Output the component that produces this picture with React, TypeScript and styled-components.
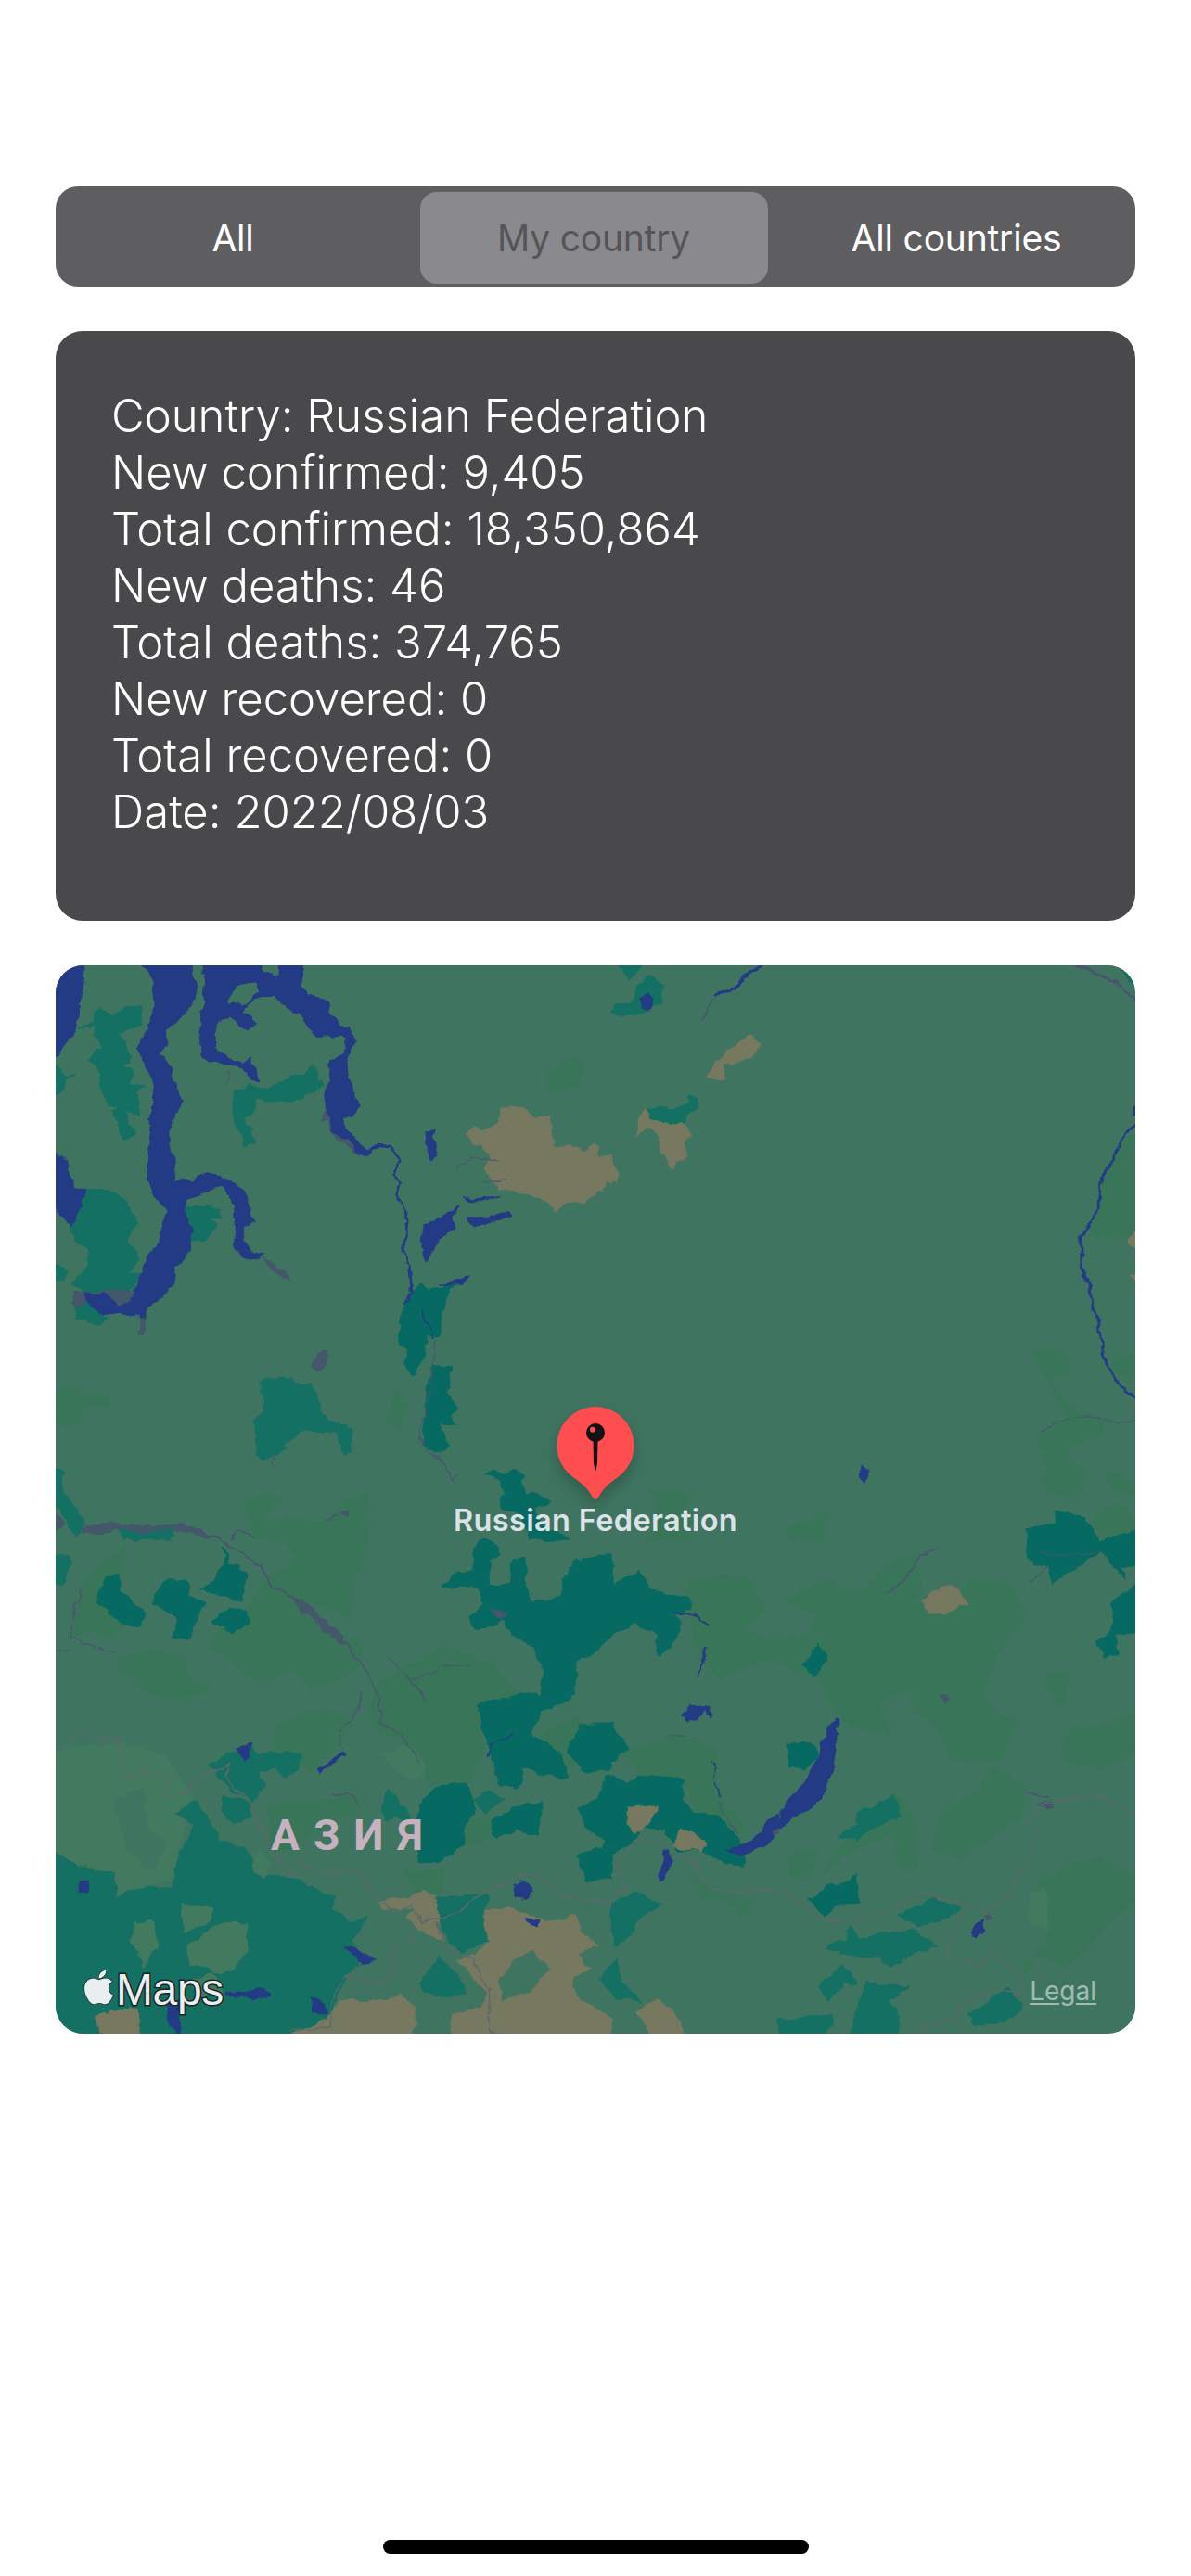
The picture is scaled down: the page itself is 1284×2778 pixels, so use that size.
import React from "react";
import styled, { createGlobalStyle } from "styled-components";
import { FaApple } from "react-icons/fa";

const GlobalStyle = createGlobalStyle`
  html, body { margin: 0; padding: 0; background: #ffffff; }
  * { box-sizing: border-box; }
`;

const Page = styled.div`
  width: 1284px;
  height: 2778px;
  padding: 201px 60px 0;
  display: flex;
  flex-direction: column;
  overflow: hidden;
  background: #ffffff;
  font-family: Inter, "Liberation Sans", sans-serif;
`;

const SegmentBar = styled.div`
  height: 108px;
  flex: none;
  padding: 6px 6px 3px;
  display: grid;
  grid-template-columns: 370px 375px 374px;
  column-gap: 16.5px;
  background: #5e5e60;
  border-radius: 24px;
`;

const Segment = styled.div<{ $selected?: boolean }>`
  display: flex;
  align-items: center;
  justify-content: center;
  font-size: 39px;
  font-weight: 400;
  letter-spacing: -0.2px;
  color: ${(p) => (p.$selected ? "#555557" : "#ffffff")};
  background: ${(p) => (p.$selected ? "#8a8a8e" : "transparent")};
  border-radius: 18px;
`;

const InfoCard = styled.div`
  margin-top: 48px;
  height: 636px;
  flex: none;
  padding: 61px 60px 0;
  background: #49494b;
  border-radius: 29px;
`;

const InfoLine = styled.div`
  font-size: 49px;
  line-height: 61px;
  font-weight: 350;
  letter-spacing: 0px;
  color: #ffffff;
  white-space: nowrap;
`;

const MapSurface = styled.div`
  position: relative;
  margin-top: 48px;
  height: 1152px;
  flex: none;
  overflow: hidden;
  background: #3f7560;
  border-radius: 30px;
`;

const MapArt = styled.svg`
  display: block;
  width: 100%;
  height: 100%;
`;

const PinWrap = styled.svg`
  position: absolute;
  left: 532px;
  top: 472px;
  width: 100px;
  height: 110px;
  overflow: visible;
  filter: drop-shadow(0 8px 8px rgba(0, 0, 0, 0.22));
`;

const PinLabel = styled.div`
  position: absolute;
  left: 0;
  right: 0;
  top: 581px;
  text-align: center;
  font-size: 32.5px;
  line-height: 36px;
  font-weight: 600;
  letter-spacing: 0.35px;
  color: #dde2e8;
`;

const RegionLabel = styled.div`
  position: absolute;
  left: 232px;
  top: 911px;
  font-family: Roboto, Inter, sans-serif;
  font-size: 46px;
  line-height: 54px;
  font-weight: 700;
  letter-spacing: 15px;
  color: #c6b2bf;
`;

const MapsMark = styled.div`
  position: absolute;
  left: 30px;
  top: 1081px;
  display: flex;
  align-items: flex-start;
  gap: 2px;
`;

const AppleGlyph = styled(FaApple)`
  width: 33px;
  height: 42px;
  fill: #e9eff0;
  stroke: #1c2322;
  stroke-width: 16px;
  paint-order: stroke fill;
`;

const MapsWord = styled.span`
  font-family: "Liberation Sans", Arial, sans-serif;
  font-size: 48px;
  line-height: 48px;
  letter-spacing: -0.4px;
  color: #e9eff0;
  -webkit-text-stroke: 3px #1c2322;
  paint-order: stroke fill;
`;

const LegalLink = styled.div`
  position: absolute;
  right: 42px;
  top: 1088px;
  font-size: 28px;
  line-height: 36px;
  font-weight: 400;
  color: #a0bcb2;
  text-decoration: underline;
  text-underline-offset: 3px;
`;

const HomeIndicator = styled.div`
  margin-top: 546px;
  width: 459px;
  height: 15px;
  flex: none;
  align-self: center;
  background: #000000;
  border-radius: 8px;
`;

const C = {
  w: "#233b85",
  b: "#3f7560",
  l: "#397558",
  m: "#427a60",
  d: "#147063",
  k: "#066a62",
  t: "#777860",
  g: "#45576b",
};

type Fill = [keyof typeof C, string];
type Line = [string, number, string];
type Layer = { tf: string; fills: Fill[]; lines?: Line[] };

const BORDER = "#5c686a";
const WET = "#48566d";

const layers: Layer[] = [
  {
    tf: "translate(40 1020) scale(.3954 .35714)",
    fills: [
      ["d", "165,180 205,215 240,185 285,185 285,235 250,245 215,265 245,290 255,350 225,365 265,375 250,420 295,425 270,440 280,510 235,500 265,570 240,585 210,510 225,480 195,480 170,420 175,380 140,345 175,310 150,245 115,250 155,235"],
      ["d", "51,360 80,395 105,395 70,405 75,430 51,450"],
      ["d", "535,450 580,420 610,440 690,400 730,390 745,360 765,370 760,405 780,425 705,470 600,465 590,505 560,520 585,550 580,575 600,590 570,608 545,550 535,515"],
      ["d", "135,740 180,735 210,745 245,780 270,830 245,890 280,950 250,990 290,990 255,1040 200,1050 130,1045 95,1020 140,965 145,925 115,900 90,845"],
      ["d", "400,790 470,785 500,795 495,820 470,825 485,850 460,890 420,895"],
      ["d", "110,1060 160,1090 195,1120 170,1150 135,1130 105,1130"],
      ["d", "51,960 70,975 85,985 75,1010 51,1005"],
      ["k", "1045,1020 1075,1040 1140,1020 1110,1060 1100,1100 1095,1180 1060,1180 1065,1200 1040,1260 1025,1300 1000,1260 1005,1225 1030,1240 985,1205 1000,1090 1020,1050"],
      ["k", "1080,1270 1130,1270 1115,1350 1145,1395 1125,1420 1145,1445 1095,1440 1120,1510 1100,1530 1050,1500 1060,1420 1060,1340"],
      ["d", "612,1310 690,1305 715,1325 750,1320 770,1400 795,1440 860,1455 850,1530 830,1525 815,1465 780,1470 730,1460 680,1500 660,1535 620,1550 605,1540 590,1440 620,1400"],
      ["l", "1385,390 1440,350 1480,335 1485,425 1400,440"],
      ["l", "51,1340 110,1330 130,1360 195,1350 195,1385 130,1390 125,1450 80,1450 51,1440"],
      ["l", "950,1430 980,1340 1010,1385 990,1460"],
      ["t", "1175,570 1195,545 1220,560 1260,530 1270,490 1290,485 1320,490 1360,520 1395,518 1405,570 1410,610 1445,600 1490,625 1520,600 1530,640 1568,640 1568,715 1545,705 1530,740 1490,775 1445,770 1410,795 1390,770 1330,745 1260,735 1220,675 1235,630 1215,595 1195,598"],
      ["g", "775,1230 790,1225 785,1265 760,1290 750,1270"],
      ["g", "830,410 798,470 775,525 795,535 815,535 825,500 840,440"],
      ["g", "795,540 830,545 880,630 860,615 810,580"],
      ["g", "615,940 650,960 690,1010 660,1000"],
      ["g", "100,1050 260,1040 255,1075 215,1085 190,1060 140,1060 110,1095 95,1085"],
      ["g", "280,1130 295,1130 288,1175 275,1170"],
      ["w", "40,40 132,40 125,100 115,180 100,260 80,290 40,340"],
      ["w", "265,40 320,92 318,130 322,180 300,255 272,310 290,355 315,395 318,440 318,500 300,525 312,570 305,640 305,710 325,760 358,800 335,860 338,890 305,935 290,985 270,1035 255,1075 215,1085 190,1055 135,1050 140,1078 165,1098 200,1110 265,1115 297,1125 300,1090 330,1070 370,1025 378,970 420,920 420,860 400,800 405,770 440,745 500,728 515,735 540,790 545,850 537,905 570,950 610,935 622,930 590,925 558,893 557,850 590,835 578,800 565,740 525,715 490,690 460,685 425,710 400,705 372,710 375,660 360,610 365,540 395,470 360,360 330,330 355,290 355,255 420,190 432,130 420,40"],
      ["w", "40,620 85,650 80,680 105,735 135,735 115,790 95,845 40,775"],
      ["w", "440,40 725,40 720,130 760,160 795,170 800,205 820,240 850,245 865,290 845,340 850,390 875,480 860,515 835,520 840,555 870,590 900,620 930,598 960,600 990,655 985,650 960,610 930,605 900,635 875,625 850,590 805,560 800,530 780,470 795,410 798,350 835,320 848,285 830,268 770,275 740,250 725,215 680,180 650,155 600,155 570,175 557,200 580,205 592,235 570,255 550,240 525,212 490,230 485,260 490,310 530,345 570,355 580,340 590,365 606,410 585,405 570,370 530,360 470,350 445,330 445,260 455,180 460,100"],
      ["b", "525,170 550,120 590,115 598,135 570,170"],
      ["b", "612,40 655,40 655,92 620,80"],
      ["w", "1060,560 1085,550 1078,575 1090,630 1075,645 1062,590"],
      ["w", "1165,755 1205,770 1255,755 1210,775 1170,765"],
      ["w", "1175,820 1230,822 1285,800 1285,820 1230,830 1185,845"],
      ["w", "1150,790 1130,825 1135,850 1105,880 1075,920 1060,950 1048,930 1055,840 1100,820"],
      ["w", "1100,1022 1180,1000 1155,1025"],
    ],
    lines: [
      [C.w, 2.5, "985,650 975,690 988,720 980,750 1003,800 1012,840 1005,880 995,925 1015,965 1022,1050 1000,1080"],
      [C.w, 1.5, "1050,1100 1055,1135 1080,1160 1078,1190"],
      [WET, 1.2, "1140,675 1185,635 1255,652"],
      [WET, 1.2, "1222,715 1278,705"],
      [WET, 1.2, "520,380 520,430"],
      [WET, 1.2, "1085,1190 1075,1300 1060,1400 1040,1490 1100,1560"],
    ],
  },
  {
    tf: "translate(640 1020) scale(.3954 .35714)",
    fills: [
      ["l", "1500,560 1435,590 1420,650 1385,710 1375,790 1355,850 1370,880 1500,880"],
      ["l", "1200,1230 1240,1210 1300,1250 1300,1290 1240,1310 1290,1380 1350,1420 1400,1440 1380,1480 1340,1490 1300,1510 1260,1568 1225,1568 1210,1470 1290,1430"],
      ["l", "1400,1270 1500,1215 1500,1330"],
      ["d", "60,40 140,40 100,100 85,80"],
      ["d", "120,130 150,92 175,115 195,118 180,150 185,170 140,195 100,205 75,210 50,200 60,175 100,170"],
      ["d", "150,495 180,485 215,490 260,475 260,455 275,460 280,490 250,510 245,545 170,530 155,520"],
      ["d", "1440,75 1490,120 1490,140"],
      ["t", "0,600 12,610 0,650 50,635 65,712 40,700 25,740 0,730"],
      ["t", "315,400 335,350 365,325 395,290 430,272 458,298 425,342 408,340 375,365 350,350 350,402"],
      ["t", "112,575 120,545 145,495 155,530 170,530 245,545 268,570 245,590 255,635 210,670 190,635 170,565 150,545 125,560"],
      ["t", "1490,850 1460,900 1490,930"],
      ["t", "1490,990 1460,1000 1490,1020"],
      ["w", "130,155 150,145 170,165 150,195 135,185"],
      ["w", "1470,480 1490,475 1490,515 1470,510"],
    ],
    lines: [
      [WET, 1.2, "295,225 330,155"],
      [C.w, 4, "330,155 350,140 385,130 410,95 440,75 470,50"],
      [C.w, 3, "1490,530 1440,575 1420,640 1385,700 1375,790 1355,840 1330,880 1330,960 1350,1020 1355,1080 1380,1150 1390,1240 1425,1310 1450,1345 1490,1375"],
      [WET, 3, "1300,50 1350,70 1420,110 1490,175"],
      [WET, 1.2, "1215,1465 1270,1440 1350,1420 1440,1440 1477,1430"],
    ],
  },
  {
    tf: "translate(40 1560) scale(.3954 .33333)",
    fills: [
      ["l", "570,170 620,150 665,170 685,135 660,180 625,215 610,265 595,285 570,225"],
      ["l", "835,170 870,165 900,150 895,300 720,300 800,240"],
      ["d", "40,70 75,85 62,100 70,150 100,185 125,240 125,270 105,285 90,260 70,205 40,180"],
      ["d", "605,0 680,0 665,15 640,30 620,45 605,30"],
      ["d", "825,0 855,0 840,25"],
      ["k", "1065,0 1120,0 1100,20"],
      ["k", "1222,85 1250,80 1270,100 1305,75 1330,90 1320,120 1340,155 1355,145 1395,180 1365,200 1355,230 1400,270 1450,300 1340,300 1340,270 1315,215 1262,200 1275,145 1265,115 1240,100"],
      ["g", "40,210 75,245 60,270 40,270"],
      ["g", "125,270 180,248 265,255 330,260 400,255 440,270 495,295 440,285 400,275 330,275 265,270 180,270 130,285"],
      ["d", "220,270 380,265 360,300 240,300"],
      ["g", "830,212 845,208 845,224 830,222"],
    ],
    lines: [
      [WET, 1.2, "1080,15 1110,65 1135,110 1145,90"],
      [WET, 1.5, "525,295 550,275 600,295 670,295 740,255 820,225"],
      [WET, 1.2, "640,30 645,65"],
    ],
  },
  {
    tf: "translate(640 1560) scale(.3954 .33333)",
    fills: [
      ["l", "150,140 270,155 250,190 270,300 150,300 180,190"],
      ["l", "525,265 600,240 635,215 640,235 625,300 540,300"],
      ["l", "1225,0 1295,0 1305,60 1340,65 1335,125 1310,170 1240,145 1220,110 1245,75"],
      ["l", "1390,90 1420,90 1490,130 1490,160 1410,130"],
      ["l", "1400,195 1440,190 1490,260 1490,290 1380,280 1370,250"],
      ["k", "1180,270 1230,265 1265,245 1260,210 1340,225 1340,270 1370,300 1180,300"],
      ["w", "735,60 748,75 748,85 737,115 725,100 725,85"],
    ],
  },
  {
    tf: "translate(40 1640) scale(.3954 .3699)",
    fills: [
      ["l", "100,340 125,190 170,130 240,80 230,150 215,250 240,300 200,340 150,320"],
      ["l", "470,360 520,300 600,240 720,220 760,270 840,340 885,340 880,420 810,470 740,480 700,430 600,470 520,400"],
      ["l", "220,400 340,380 400,400 420,470 480,490 400,520 290,500 230,440"],
      ["l", "590,0 895,0 905,70 870,150 850,280 760,240 680,240 570,260 620,170 700,120 680,60 600,50"],
      ["l", "1000,430 1100,370 1200,400 1240,420 1310,500 1200,560 1220,660 1180,760 1080,770 1050,720 1060,680 1000,640 940,620 900,560 930,480"],
      ["l", "650,600 730,560 830,560 860,600 840,620 800,680 750,730 680,670 650,660"],
      ["m", "40,690 80,660 230,650 350,680 420,800 400,900 370,1040 280,1070 215,1100 200,1020 100,1000 40,960"],
      ["b", "210,820 290,780 300,900 350,940 320,1020 290,1010 240,940"],
      ["l", "630,830 760,820 870,800 880,840 770,900 700,950 640,960"],
      ["m", "945,680 1000,660 1050,700 1055,740 1020,760 960,710"],
      ["l", "1000,1030 1100,1020 1105,1080 1040,1090"],
      ["l", "1170,880 1240,860 1235,930 1175,945"],
      ["l", "1380,620 1480,570 1490,660 1450,740 1380,700"],
      ["k", "165,215 185,165 225,160 225,200 295,275 280,310 235,300 165,240"],
      ["k", "310,240 350,170 380,170 410,185 415,225 455,240 430,300 410,345 370,345 385,280"],
      ["k", "445,200 465,185 510,130 510,80 525,130 555,130 572,170 560,235 505,215"],
      ["k", "480,290 520,250 570,265 575,295 535,325 505,310"],
      ["d", "40,100 90,100 90,130 70,185 40,190"],
      ["k", "1185,85 1215,55 1255,70 1258,100 1235,115 1230,190 1290,180 1300,110 1330,110 1330,190 1350,240 1420,220 1465,120 1568,100 1568,330 1510,390 1470,410 1465,510 1370,560 1345,620 1430,680 1445,750 1380,740 1330,720 1310,780 1260,770 1240,690 1230,650 1200,530 1280,520 1330,495 1370,520 1380,420 1345,360 1310,350 1270,290 1200,320 1180,290 1215,245 1205,190 1105,195 1140,150 1195,145"],
      ["k", "1480,590 1568,590 1568,730 1490,730 1445,670"],
      ["k", "1568,780 1480,840 1500,900 1568,940"],
      ["k", "1470,980 1520,950 1568,960 1568,1040 1500,1050"],
      ["k", "1040,830 1080,780 1170,760 1195,850 1165,890 1165,950 1095,990 1040,990 1030,950"],
      ["d", "475,710 520,680 590,660 605,680 680,670 720,680 710,720 680,750 640,720 600,730 620,770 590,820 540,790 500,760"],
      ["d", "505,800 580,820 585,870 540,880 505,850"],
      ["d", "1190,810 1230,790 1275,810 1220,850"],
      ["k", "1240,880 1310,830 1375,820 1365,920 1310,900 1245,925"],
      ["d", "940,840 960,785 1010,845 1020,880 975,860 950,870"],
      ["d", "40,960 110,1010 210,1025 215,1100 300,1065 370,1070 380,1010 430,880 380,860 430,810 500,930 570,960 620,1030 690,1040 760,1070 810,1100 800,1130 860,1170 900,1160 860,1220 880,1290 840,1330 800,1440 790,1510 40,1510"],
      ["m", "480,1180 575,1170 575,1240 540,1300 500,1320 420,1290 410,1240"],
      ["m", "390,1115 480,1130 470,1170 400,1200"],
      ["m", "270,1170 310,1170 330,1240 290,1300 260,1220"],
      ["m", "410,1340 480,1320 500,1370 440,1390"],
      ["m", "600,960 640,1000 620,1040 590,1020"],
      ["t", "800,1440 830,1400 960,1400 990,1380 1030,1420 1025,1510 680,1510 760,1470"],
      ["t", "160,1440 230,1430 270,1420 280,1510 180,1510"],
      ["t", "935,1110 1020,1095 1050,1080 1085,1090 1118,1130 1090,1180 1105,1230 1060,1200 1030,1180 1010,1155 1040,1130 990,1130 940,1130"],
      ["t", "1205,1170 1220,1140 1290,1130 1340,1150 1400,1170 1470,1150 1480,1200 1530,1235 1470,1270 1510,1300 1450,1340 1480,1400 1568,1450 1568,1510 1130,1510 1130,1440 1210,1420 1230,1380 1170,1300 1140,1280 1200,1270 1225,1230"],
      ["b", "1300,1280 1350,1260 1400,1310 1340,1370 1270,1400 1260,1350"],
      ["d", "1040,1350 1100,1270 1175,1370 1120,1390 1060,1370"],
      ["d", "1090,1100 1230,1090 1210,1180 1230,1220 1150,1260 1105,1200"],
      ["g", "700,220 720,230 780,285 835,345 835,360 770,310 720,260"],
      ["g", "130,20 230,10 300,25 300,35 230,25 130,40"],
      ["g", "1240,260 1280,270 1260,290"],
      ["w", "115,1055 140,1050 135,1085 115,1085"],
      ["w", "838,1245 880,1255 920,1280 900,1290 860,1270"],
      ["w", "545,665 580,655 580,680 560,695"],
      ["w", "765,730 830,680 835,685 770,735"],
      ["w", "1300,1060 1330,1045 1355,1075 1330,1100 1300,1095"],
      ["w", "1330,1160 1370,1165 1365,1185 1335,1170"],
      ["w", "510,1375 560,1380 620,1365 640,1380 600,1395 520,1385"],
      ["w", "355,1400 390,1405 385,1510 355,1450"],
      ["w", "750,1390 780,1400 790,1440 750,1430"],
    ],
    lines: [
      [WET, 2, "300,25 440,25 510,65 610,130 640,190 710,230"],
      [WET, 1.5, "835,350 870,400 905,450 930,520 935,590 990,620 1040,700"],
      [WET, 1.5, "820,625 830,670"],
      [WET, 1.5, "885,490 870,570 820,620"],
      [WET, 1.2, "1015,470 1100,430 1185,415"],
      [WET, 1.5, "120,190 90,340 210,385"],
      [WET, 1.2, "40,385 90,375"],
      [WET, 1.5, "960,400 1060,520"],
      [WET, 1.5, "800,800 860,800 875,830"],
      [C.w, 1.5, "1230,690 1240,650 1300,620"],
      [BORDER, 1.5, "40,680 90,660 90,635 130,618 185,640 220,630 240,745 290,740 295,720 310,740 365,745 350,800 400,800 430,760 525,710 510,750 580,820 640,950 685,1040 715,990 755,1035 840,1020 880,1030 940,1110 975,1140 1020,1120 1050,1170 1090,1160 1150,1140 1240,1070 1330,1030 1400,1055 1415,1095 1510,1110 1568,1125"],
      [BORDER, 1.5, "690,1490 800,1475 800,1420 835,1330 880,1345 940,1350 970,1320 965,1250 1020,1215 1025,1170"],
      [BORDER, 1.5, "1090,1170 1105,1240 1190,1280 1235,1370 1230,1485 1300,1510"],
    ],
  },
  {
    tf: "translate(640 1640) scale(.3954 .3699)",
    fills: [
      ["l", "250,170 420,160 470,260 410,320 500,350 600,330 600,270 520,230 650,170 690,210 750,190 800,130 880,100 890,190 870,240 1000,270 1020,170 1130,180 1180,280 1110,370 1060,500 1100,560 1040,660 980,700 950,620 860,540 880,480 780,530 800,620 700,600 660,560 620,470 470,400 340,460 280,360"],
      ["l", "0,700 60,660 140,660 230,620 260,640 330,660 340,800 420,920 280,850 250,760 130,750 90,680"],
      ["l", "1220,1050 1300,1000 1380,980 1490,1050 1490,1090 1380,1200 1290,1300 1230,1270 1170,1290 1175,1320 1250,1190 1220,1150"],
      ["l", "925,960 950,850 1050,790 1090,720 1180,780 1160,870 1000,980"],
      ["l", "620,1030 680,940 720,900 750,850 830,800 880,870 880,1020 830,1020 820,920 720,950"],
      ["l", "1300,600 1400,600 1490,560 1490,680 1380,720 1270,700"],
      ["l", "950,580 1060,560 1160,580 1110,700 1010,700 970,660"],
      ["l", "1220,470 1250,440 1300,450 1280,540 1240,500"],
      ["l", "270,1040 310,1070 370,1090 440,1110 400,1160 360,1100 300,1100"],
      ["l", "530,980 610,950 590,1040 535,1040"],
      ["m", "1190,1090 1230,1070 1240,1190 1190,1170"],
      ["k", "0,190 70,180 130,145 155,200 215,215 260,225 265,250 220,270 240,300 210,370 175,395 170,330 110,300 70,325 0,325"],
      ["k", "1180,30 1270,0 1340,0 1380,60 1490,20 1490,130 1440,130 1450,170 1380,90 1320,130 1250,180 1230,130 1180,115"],
      ["k", "1490,180 1410,240 1420,290 1400,335 1365,350 1395,400 1430,385 1420,340 1490,325"],
      ["k", "0,590 55,610 95,660 60,700 0,730"],
      ["k", "35,740 90,760 130,745 250,755 235,810 270,850 340,860 370,900 410,950 410,1010 340,990 300,960 230,960 200,900 105,890 120,915 90,950 60,970 25,960 40,900 0,900 0,830"],
      ["k", "530,650 600,650 605,690 570,720 535,720"],
      ["k", "575,420 610,360 640,400 600,455"],
      ["k", "590,1100 650,1060 700,1050 720,1030 720,1110 660,1120 630,1150"],
      ["d", "50,1120 110,1080 185,1115 130,1150 100,1210 60,1240 50,1190"],
      ["d", "665,920 720,880 715,845 770,830 825,800 835,860 770,890 720,930"],
      ["d", "635,1240 690,1220 700,1180 720,1220 800,1200 880,1195 930,1240 860,1270 810,1300 780,1270 690,1270"],
      ["d", "615,1360 680,1290 715,1350 680,1350 640,1400"],
      ["d", "745,1350 860,1360 800,1400 830,1440 830,1510 700,1510 720,1410"],
      ["d", "830,1150 930,1100 1000,1130 940,1170 880,1180"],
      ["d", "20,1340 60,1280 70,1340 130,1400 60,1390"],
      ["d", "500,1460 650,1440 650,1470 620,1510 520,1510"],
      ["d", "1020,1440 1130,1360 1170,1420 1120,1460 1040,1470"],
      ["t", "95,840 175,830 150,880 105,915 95,880"],
      ["t", "220,950 235,895 310,940 290,960"],
      ["t", "895,230 950,195 995,195 1020,245 970,265 915,275"],
      ["t", "115,1430 175,1395 240,1460 250,1510 170,1510"],
      ["t", "0,1420 50,1450 20,1455"],
      ["g", "945,510 965,510 970,520 955,535"],
      ["g", "1215,825 1250,815 1258,835 1240,840"],
      ["w", "360,960 410,945 450,920 475,880 510,860 525,820 580,760 610,690 640,600 665,580 662,650 650,730 635,770 620,810 570,850 520,880 490,930 450,955 400,975"],
      ["g", "487,905 510,900 505,915 490,920"],
      ["w", "190,970 205,965 210,1000 195,1040 180,1055"],
      ["w", "1030,1195 1060,1165 1060,1195 1040,1215"],
      ["w", "240,570 265,540 320,545 325,575 310,550 270,580 255,585"],
      ["g", "1060,1150 1075,1140 1085,1155 1070,1165"],
    ],
    lines: [
      [C.w, 2, "218,265 280,275 312,310"],
      [C.w, 2, "305,370 290,420 290,455"],
      [C.w, 1.2, "320,700 335,720 325,750 340,790 345,810"],
      [WET, 1.2, "340,820 365,870 395,915"],
      [WET, 1.5, "800,210 850,170 890,100 940,80"],
      [WET, 1.5, "1190,185 1230,140"],
      [WET, 1.2, "210,630 250,620"],
      [WET, 1.2, "1215,90 1300,100 1380,90"],
      [WET, 1.5, "1180,800 1240,800"],
      [BORDER, 1.5, "0,1110 35,1120 90,1070 60,1010 120,920 270,990 310,1070 360,1085 500,1075 565,1110 600,1155 680,1170 810,1140 895,1080 1065,1140 1110,1110 1140,1075 1215,915 1180,875 1240,820 1360,800 1440,830 1490,885"],
      [BORDER, 1.5, "1015,1120 960,1270 975,1290 1015,1275 1045,1300 1085,1265 1165,1330 1170,1375 1110,1370 1000,1405 985,1450 900,1475 880,1510"],
    ],
  },
];

const infoLines = [
  "Country: Russian Federation",
  "New confirmed: 9,405",
  "Total confirmed: 18,350,864",
  "New deaths: 46",
  "Total deaths: 374,765",
  "New recovered: 0",
  "Total recovered: 0",
  "Date: 2022/08/03",
];

export default function App() {
  return (
    <>
      <GlobalStyle />
      <Page>
        <SegmentBar>
          <Segment>All</Segment>
          <Segment $selected>My country</Segment>
          <Segment>All countries</Segment>
        </SegmentBar>
        <InfoCard>
          {infoLines.map((line) => (
            <InfoLine key={line}>{line}</InfoLine>
          ))}
        </InfoCard>
        <MapSurface>
          <MapArt viewBox="60 1041 1164 1152" preserveAspectRatio="none">
            <defs>
              <filter id="coastline" x="0" y="0" width="1" height="1" filterUnits="objectBoundingBox" colorInterpolationFilters="sRGB">
                <feTurbulence type="fractalNoise" baseFrequency="0.07" numOctaves="3" seed="4" result="noise" />
                <feDisplacementMap in="SourceGraphic" in2="noise" scale="9" xChannelSelector="R" yChannelSelector="G" />
              </filter>
            </defs>
            <g filter="url(#coastline)">
              <rect x="60" y="1041" width="1164" height="1152" fill={C.b} />
              {layers.map((layer, i) => (
                <g key={i} transform={layer.tf}>
                  {layer.fills.map(([c, pts], j) => (
                    <polygon
                      key={j}
                      points={pts}
                      fill={C[c]}
                      stroke={C[c]}
                      strokeWidth={1.5}
                      strokeLinejoin="round"
                      vectorEffect="non-scaling-stroke"
                    />
                  ))}
                  {layer.lines?.map(([color, w, pts], j) => (
                    <polyline
                      key={j}
                      points={pts}
                      fill="none"
                      stroke={color}
                      strokeWidth={w}
                      strokeLinejoin="round"
                      vectorEffect="non-scaling-stroke"
                    />
                  ))}
                </g>
              ))}
            </g>
          </MapArt>
          <RegionLabel>АЗИЯ</RegionLabel>
          <PinWrap viewBox="0 0 100 110">
            <path
              d="M50 4A42 42 0 0 1 79 76C70 84 60 88 53 102Q50 106 47 102C40 88 30 84 21 76A42 42 0 0 1 50 4Z"
              fill="#ff4d50"
            />
            <circle cx="50" cy="32" r="10" fill="#111214" />
            <circle cx="47" cy="28.8" r="3" fill="#ff4d50" />
            <path d="M47.5 38H52.5L52 65L50.5 73H49.5L48 65Z" fill="#111214" />
          </PinWrap>
          <PinLabel>Russian Federation</PinLabel>
          <MapsMark>
            <AppleGlyph />
            <MapsWord>Maps</MapsWord>
          </MapsMark>
          <LegalLink>Legal</LegalLink>
        </MapSurface>
        <HomeIndicator />
      </Page>
    </>
  );
}
